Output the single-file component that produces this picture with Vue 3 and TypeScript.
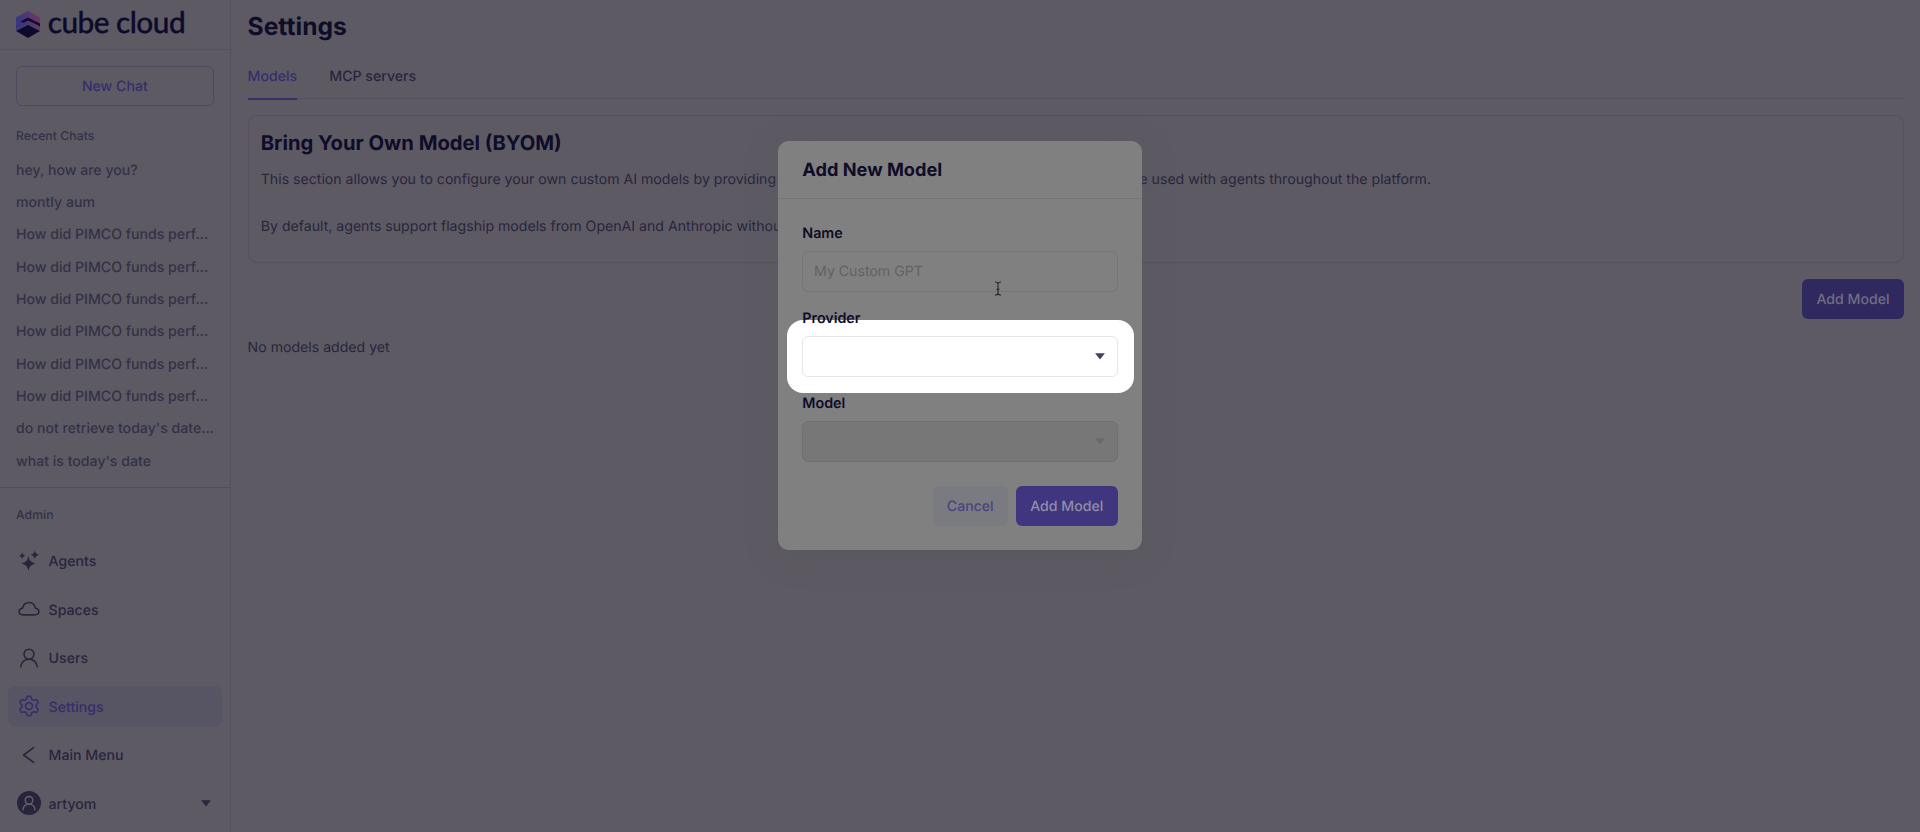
<script setup lang="ts">
interface NavItem {
  label: string
  icon: 'agents' | 'spaces' | 'users' | 'settings' | 'back'
  active?: boolean
}

const chats: string[] = [
  'hey, how are you?',
  'montly aum',
  ...Array.from({ length: 6 }, () => 'How did PIMCO funds perf...'),
  "do not retrieve today's date...",
  "what is today's date",
]

const nav: NavItem[] = [
  { label: 'Agents', icon: 'agents' },
  { label: 'Spaces', icon: 'spaces' },
  { label: 'Users', icon: 'users' },
  { label: 'Settings', icon: 'settings', active: true },
  { label: 'Main Menu', icon: 'back' },
]

// Outline of a rounded six-tooth gear, centred on a 24px canvas, one tooth pointing up.
const gearPath: string = (() => {
  const steps = 96
  const points: string[] = []
  for (let i = 0; i < steps; i++) {
    const a = (i / steps) * Math.PI * 2
    const wave = Math.max(-1, Math.min(1, Math.cos(6 * a + Math.PI) * 1.9))
    const r = 8.5 + wave * 1.3
    points.push(`${(12 + r * Math.cos(a)).toFixed(2)} ${(12 + r * Math.sin(a)).toFixed(2)}`)
  }
  return `M${points.join(' L')}Z`
})()
</script>

<template>
  <div class="app">
    <aside class="sidebar">
      <header class="brand">
        <svg width="190" height="48" viewBox="0 0 190 48">
          <defs>
            <linearGradient id="roof" x1="0" x2="1" y1="0.3" y2="0">
              <stop offset="0" stop-color="#38367c" />
              <stop offset="0.45" stop-color="#503973" />
              <stop offset="1" stop-color="#7d3758" />
            </linearGradient>
          </defs>
          <path d="M28 10.8 L40 17.5 V30.4 L28 24.2 L16 30.4 V17.5Z" fill="url(#roof)" />
          <path d="M28 17.4 L40 23.6 L40 26.4 L36.6 24.6 L28 20.4 L23.6 22.8 L20.4 21.4Z" fill="#100c2f" />
          <path d="M28 24.8 L40 31.1 L28 37.9 L16 31.1Z" fill="#0d0a2c" />
          <text class="wordmark" x="47.7" y="33" textLength="138">cube cloud</text>
        </svg>
      </header>

      <button class="new-chat">New Chat</button>
      <div class="caption recent">Recent Chats</div>
      <ul class="chats">
        <li v-for="(chat, i) in chats" :key="i">{{ chat }}</li>
      </ul>

      <div class="admin">
        <div class="caption">Admin</div>
        <nav>
          <a v-for="item in nav" :key="item.label" class="nav-item" :class="{ active: item.active }">
            <svg class="icon" viewBox="0 0 24 24">
              <g v-if="item.icon === 'agents'" fill="currentColor">
                <path d="M11.4 7 Q12.2 13.3 18.4 14.4 Q12.2 15.5 11.4 21.8 Q10.6 15.5 4.4 14.4 Q10.6 13.3 11.4 7Z" />
                <path d="M17.8 1.4 Q18.5 5 22.3 5.8 Q18.5 6.6 17.8 10.2 Q17.1 6.6 13.3 5.8 Q17.1 5 17.8 1.4Z" />
                <path d="M5.2 3.6 Q5.7 6.2 8.4 6.8 Q5.7 7.4 5.2 10 Q4.7 7.4 2 6.8 Q4.7 6.2 5.2 3.6Z" />
              </g>
              <path
                v-else-if="item.icon === 'spaces'"
                class="line"
                d="M6.3 17.9 C0.9 17.9 0.8 11.9 5.6 11.2 C7.2 3.6 16.8 3.6 18.4 11.2 C23.2 11.9 23.1 17.9 17.7 17.9Z"
              />
              <g v-else-if="item.icon === 'users'" class="line">
                <circle cx="12" cy="8.2" r="5" />
                <path d="M3.8 20.6 C4.6 16 7.8 13.3 12 13.3 S19.4 16 20.2 20.6" />
              </g>
              <g v-else-if="item.icon === 'settings'" class="line">
                <circle cx="12" cy="12" r="3.4" />
                <path :d="gearPath" />
              </g>
              <path v-else class="line" d="M16.6 4.6 L6.6 12 L16.6 19.4" />
            </svg>
            <span>{{ item.label }}</span>
          </a>
          <a class="nav-item">
            <svg class="icon" viewBox="0 0 24 24">
              <circle cx="12" cy="12" r="12" fill="#28243d" />
              <g fill="none" stroke="#64616d" stroke-width="1.4" stroke-linecap="round">
                <circle cx="12" cy="9.3" r="3.8" />
                <path d="M6 18.8 C6.4 15.2 8.8 13.1 12 13.1 S17.6 15.2 18 18.8" />
              </g>
            </svg>
            <span>artyom</span>
            <svg class="caret" viewBox="0 0 11 8"><path d="M1 1.2 H10 L5.5 6.8Z" /></svg>
          </a>
        </nav>
      </div>
    </aside>

    <main class="content">
      <h1>Settings</h1>
      <div class="tabs">
        <div class="tab current">Models</div>
        <div class="tab">MCP servers</div>
      </div>
      <section class="card">
        <h2>Bring Your Own Model (BYOM)</h2>
        <p>
          <span class="lead">This section allows you to configure your own custom AI models by providing</span>
          <span>be used with agents throughout the platform.</span>
        </p>
        <p>By default, agents support flagship models from OpenAI and Anthropic without</p>
      </section>
      <div class="actions"><button class="primary dim">Add Model</button></div>
      <div class="empty">No models added yet</div>
    </main>

    <div class="modal">
      <div class="modal-title">Add New Model</div>
      <div class="form">
        <label>Name</label>
        <div class="field placeholder">My Custom GPT</div>
        <label>Provider</label>
        <div class="field spotlight">
          <svg class="caret" viewBox="0 0 11 8"><path d="M1 1.2 H10 L5.5 6.8Z" /></svg>
        </div>
        <label>Model</label>
        <div class="field disabled">
          <svg class="caret" viewBox="0 0 11 8"><path d="M1 1.2 H10 L5.5 6.8Z" /></svg>
        </div>
        <div class="buttons">
          <button class="secondary">Cancel</button>
          <button class="primary">Add Model</button>
        </div>
      </div>
      <svg class="cursor" viewBox="0 0 8 15">
        <path d="M1 1 Q4 1 4 3 Q4 1 7 1 M4 2.5 V12.5 M1 14 Q4 14 4 12 Q4 14 7 14 M2.6 8.4 H5.4" />
      </svg>
    </div>
  </div>
</template>

<style>
body {
  margin: 0;
  overflow: hidden;
}
</style>

<style scoped>
.app {
  position: relative;
  display: flex;
  width: 1920px;
  height: 832px;
  overflow: hidden;
  background: #5d5a64;
  color: #28253c;
  font-family: Inter, 'Liberation Sans', sans-serif;
  font-size: 14.12px;
  text-rendering: geometricPrecision;
}
.app * {
  box-sizing: border-box;
}
button {
  height: 40.4px;
  padding: 1.4px 0 0;
  border: 0;
  border-radius: 6px;
  font: inherit;
  font-weight: 500;
  text-rendering: inherit;
}
.sidebar {
  display: flex;
  flex-direction: column;
  flex: none;
  width: 231.4px;
  border-right: 1px solid #524f60;
}
.brand {
  height: 49.5px;
  border-bottom: 1px solid #545162;
}
.brand svg {
  display: block;
}
.wordmark {
  font-family: Lato, sans-serif;
  font-size: 29.8px;
  font-weight: 500;
  fill: #0d0a2b;
  stroke: #0d0a2b;
  stroke-width: 0.35;
}
.new-chat {
  margin: 16.5px 16.8px 0 16px;
  padding-top: 0.4px;
  border: 1px solid #4c4961;
  background: none;
  color: #352e6a;
}
.caption {
  padding-left: 16px;
  font-size: 12.15px;
  font-weight: 500;
  line-height: 16px;
  letter-spacing: 0.1px;
  color: #343146;
}
.recent {
  margin-top: 21.3px;
}
.chats {
  flex: none;
  margin: 10.9px 0 0;
  padding: 0 16px;
  list-style: none;
  color: #343146;
  font-weight: 500;
}
.chats li {
  height: 32.34px;
  line-height: 32.34px;
  white-space: nowrap;
}
.admin {
  margin-top: 9.3px;
  padding-top: 19px;
  border-top: 1px solid #514e5f;
}
nav {
  display: flex;
  flex-direction: column;
  gap: 8.1px;
  padding: 17.6px 8px 0;
}
.nav-item {
  display: flex;
  align-items: center;
  gap: 7.6px;
  height: 40.4px;
  padding: 0 10.5px 0 9px;
  border-radius: 8px;
  color: #28253c;
  font-weight: 500;
}
.nav-item span {
  padding-top: 1.6px;
}
.nav-item.active {
  background: #575463;
  color: #352e6a;
}
.icon {
  flex: none;
  width: 24px;
  height: 24px;
}
.line {
  fill: none;
  stroke: currentColor;
  stroke-width: 1.6;
  stroke-linecap: round;
  stroke-linejoin: round;
}
.caret {
  flex: none;
  width: 12px;
  height: 8.7px;
  margin-left: auto;
  fill: currentColor;
}
.content {
  flex: 1;
  padding: 0 16px 0 16.2px;
}
h1 {
  margin: 10px 0 0;
  font-size: 24.6px;
  font-weight: 700;
  line-height: 32px;
  color: #0f0c28;
}
.tabs {
  display: flex;
  gap: 32.2px;
  height: 39.6px;
  margin-top: 17.5px;
  border-bottom: 1px solid #545161;
}
.tab {
  height: 40px;
  padding-top: 6px;
  line-height: 22px;
  font-weight: 500;
}
.current {
  border-bottom: 2px solid #352e6a;
  color: #352e6a;
}
.card {
  height: 148px;
  margin-top: 16px;
  padding: 14px 12.2px;
  border: 1px solid #53505f;
  border-radius: 9px;
}
h2 {
  margin: 0;
  font-size: 20.2px;
  font-weight: 700;
  line-height: 26px;
  color: #0f0c28;
}
p {
  margin: 13px 0 24.5px;
  line-height: 22px;
  white-space: nowrap;
}
.lead {
  display: inline-block;
  width: 870px;
}
.actions {
  display: flex;
  justify-content: flex-end;
  margin-top: 16px;
}
.primary {
  width: 102px;
  background: #40367f;
  color: #918da7;
}
.primary.dim {
  background: #2f2960;
  color: #716e84;
}
.empty {
  margin-top: 17.5px;
  line-height: 22px;
}
.modal {
  position: absolute;
  top: 141px;
  left: 778px;
  width: 364px;
  height: 409px;
  border-radius: 11px;
  background: #808080;
  color: #0f0c28;
  box-shadow: 0 6px 32px rgba(84, 87, 80, 0.3);
}
.modal-title {
  height: 58px;
  padding: 1px 0 0 24.3px;
  border-bottom: 1px solid #757577;
  font-size: 18.2px;
  font-weight: 700;
  line-height: 57px;
}
.form {
  position: relative;
  z-index: 0;
  padding: 23.3px 24.3px 0;
}
label {
  display: block;
  height: 28.5px;
  padding-top: 1px;
  font-size: 14.3px;
  line-height: 22px;
  font-weight: 600;
}
.field {
  position: relative;
  display: flex;
  align-items: center;
  height: 40.8px;
  margin-bottom: 15.8px;
  padding: 0 10.8px;
  border: 1px solid #757577;
  border-radius: 6px;
}
.placeholder {
  padding-top: 1.4px;
  color: #626262;
}
.spotlight {
  border-color: #e6e6ea;
  color: #433e62;
}
.spotlight::before {
  content: '';
  position: absolute;
  inset: -17px -17px -17px -16.6px;
  z-index: -1;
  border-radius: 16px;
  background: #fff;
}
.disabled {
  background: #777778;
  border-color: #707072;
  color: #69696e;
}
.buttons {
  display: flex;
  justify-content: flex-end;
  gap: 8px;
  margin-top: 24px;
}
.secondary {
  width: 75px;
  background: #7a7a81;
  color: #4a4380;
}
.cursor {
  position: absolute;
  left: 216px;
  top: 139.5px;
  width: 8px;
  height: 15px;
  fill: none;
  stroke: #25252a;
  stroke-width: 1.1;
}
</style>
